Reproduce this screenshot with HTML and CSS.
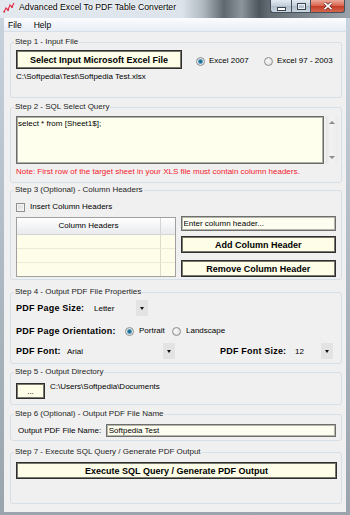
FILE: index.html
```html
<!DOCTYPE html>
<html lang="en">
<head>
  <meta charset="utf-8">
  <title>Advanced Excel To PDF Table Converter</title>
  <link rel="stylesheet" href="styles.css">
</head>
<body>
  <div class="window">
    <div class="titlebar">
      <svg class="app-icon" width="12" height="11" viewBox="0 0 12 11">
        <polyline points="1,10 3,6 5,8 7,3 9,5 11,1" fill="none" stroke="#e8344a" stroke-width="1.2"/>
        <rect x="0.5" y="9" width="1.5" height="1.5" fill="#c81e32"/>
        <rect x="4.3" y="7.3" width="1.5" height="1.5" fill="#c81e32"/>
        <rect x="8.3" y="4.3" width="1.5" height="1.5" fill="#c81e32"/>
      </svg>
      <span class="title">Advanced Excel To PDF Table Converter</span>
      <div class="caption-buttons">
        <span class="cap-btn cap-min">
          <svg width="9" height="4" viewBox="0 0 9 4"><rect x="0.5" y="0.5" width="8" height="3" fill="#fff" stroke="#3a4550"/></svg>
        </span>
        <span class="cap-btn cap-max">
          <svg width="9" height="7" viewBox="0 0 9 7"><rect x="0.5" y="0.5" width="8" height="6" fill="none" stroke="#3a4550"/><rect x="1.5" y="1.5" width="6" height="4" fill="none" stroke="#e8eef4"/></svg>
        </span>
        <span class="cap-btn cap-close">
          <svg width="10" height="8" viewBox="0 0 10 8"><path d="M1.5 0.8 L8.5 7.2 M8.5 0.8 L1.5 7.2" stroke="#5a1a12" stroke-width="3"/><path d="M1.5 0.8 L8.5 7.2 M8.5 0.8 L1.5 7.2" stroke="#fff" stroke-width="1.8"/></svg>
        </span>
      </div>
    </div>

    <div class="menubar">
      <span>File</span>
      <span>Help</span>
    </div>

    <div class="client">
      <fieldset class="group step1">
        <legend>Step 1 - Input File</legend>
        <div class="input-row">
          <button class="btn btn-input">Select Input Microsoft Excel File</button>
          <div class="radio-set">
            <span class="radio checked excel-new">Excel 2007</span>
            <span class="radio">Excel 97 - 2003</span>
          </div>
        </div>
        <div class="path">C:\Softpedia\Test\Softpedia Test.xlsx</div>
      </fieldset>

      <fieldset class="group step2">
        <legend>Step 2 - SQL Select Query</legend>
        <div class="query-row">
          <textarea class="query" readonly>select * from [Sheet1$];</textarea>
          <div class="vscroll">
            <span class="arrow-up"></span>
            <span class="arrow-down"></span>
          </div>
        </div>
        <div class="note">Note: First row of the target sheet in your XLS file must contain column headers.</div>
      </fieldset>

      <fieldset class="group step3">
        <legend>Step 3 (Optional) - Column Headers</legend>
        <div class="check-row">
          <span class="checkbox"></span>
          <span>Insert Column Headers</span>
        </div>
        <div class="headers">
          <div class="grid">
            <div class="grid-head">
              <span class="cell-main">Column Headers</span>
              <span class="cell-end"></span>
            </div>
            <div class="grid-row"><span class="cell-main"></span><span class="cell-end"></span></div>
            <div class="grid-row"><span class="cell-main"></span><span class="cell-end"></span></div>
            <div class="grid-row"><span class="cell-main"></span><span class="cell-end"></span></div>
          </div>
          <div class="side">
            <input class="field field-header" type="text" value="Enter column header..." readonly>
            <button class="btn btn-add">Add Column Header</button>
            <button class="btn btn-remove">Remove Column Header</button>
          </div>
        </div>
      </fieldset>

      <fieldset class="group step4">
        <legend>Step 4 - Output PDF File Properties</legend>
        <div class="prop-row row-size">
          <span class="prop-label size-label">PDF Page Size:</span>
          <span class="combo size-combo"><span class="combo-value">Letter</span><span class="combo-arrow"></span></span>
        </div>
        <div class="prop-row row-orient">
          <span class="prop-label orient-label">PDF Page Orientation:</span>
          <span class="radio checked portrait">Portrait</span>
          <span class="radio">Landscape</span>
        </div>
        <div class="prop-row row-font">
          <span class="prop-label font-label">PDF Font:</span>
          <span class="combo font-combo"><span class="combo-value">Arial</span><span class="combo-arrow"></span></span>
          <span class="prop-label fsize-label">PDF Font Size:</span>
          <span class="combo fsize-combo"><span class="combo-value">12</span><span class="combo-arrow"></span></span>
        </div>
      </fieldset>

      <fieldset class="group step5">
        <legend>Step 5 - Output Directory</legend>
        <div class="dir-row">
          <button class="btn btn-browse">...</button>
          <span class="dir-path">C:\Users\Softpedia\Documents</span>
        </div>
      </fieldset>

      <fieldset class="group step6">
        <legend>Step 6 (Optional) - Output PDF File Name</legend>
        <div class="name-row">
          <span class="name-label">Output PDF File Name:</span>
          <input class="field field-name" type="text" value="Softpedia Test" readonly>
        </div>
      </fieldset>

      <fieldset class="group step7">
        <legend>Step 7 - Execute SQL Query / Generate PDF Output</legend>
        <button class="btn btn-run">Execute SQL Query / Generate PDF Output</button>
      </fieldset>
    </div>
  </div>
</body>
</html>
```

FILE: styles.css
```css
html,
body {
  margin: 0;
}

body {
  width: 350px;
  height: 515px;
  overflow: hidden;
  font-family: "Liberation Sans", Arial, sans-serif;
  font-size: 8px;
  color: #000;
}

.window {
  height: 515px;
  display: flex;
  flex-direction: column;
  background: linear-gradient(to bottom, #c9d4de, #aab5bf 60%, #9aa4ac);
}

/* title bar */
.titlebar {
  height: 18px;
  flex: none;
  display: flex;
  align-items: flex-start;
  background: linear-gradient(to right, #e3e9ef 0%, #dce3ea 52%, #b0b8c0 58%, #5f676f 64%, #8c949c 69%, #4d555d 74%, #646c74 77%, #9aa3ab 100%);
}

.app-icon {
  margin: 2px 0 0 3px;
}

.title {
  margin-left: 4px;
  line-height: 15px;
  font-size: 8.7px;
  text-shadow: 0 0 3px #fff, 0 0 2px #fff;
}

.caption-buttons {
  margin-left: auto;
  margin-right: 5px;
  display: flex;
}

.cap-btn {
  box-sizing: border-box;
  height: 13px;
  display: flex;
  align-items: center;
  justify-content: center;
  border: 1px solid #46505b;
  border-top: none;
}

.cap-min {
  width: 21px;
  border-right: none;
  border-bottom-left-radius: 3px;
  background: linear-gradient(#e3e9ef, #c3ceda 50%, #aebdcb 51%, #cbd7e2);
}

.cap-min svg {
  margin-top: 5px;
}

.cap-max {
  width: 20px;
  background: linear-gradient(#e3e9ef, #c3ceda 50%, #aebdcb 51%, #cbd7e2);
}

.cap-close {
  width: 34px;
  border-left: none;
  border-bottom-right-radius: 3px;
  background: linear-gradient(#eaa898, #d8624c 50%, #c43c24 51%, #d4684f);
}

/* menu */
.menubar {
  box-sizing: border-box;
  height: 14px;
  margin: 0 4px;
  padding-left: 4px;
  display: flex;
  align-items: center;
  gap: 12px;
  font-size: 8.5px;
  background: linear-gradient(#fbfcfe, #e8edf5);
  border-bottom: 1px solid #d8dfe9;
}

.client {
  flex: 1;
  margin: 0 4px 3px;
  display: flex;
  flex-direction: column;
  background: #f0f0f0;
}

/* group boxes */
.group {
  box-sizing: border-box;
  min-width: 0;
  margin: 0 4px 0 6px;
  padding: 0 5px;
  border: 1px solid #d5dfe5;
  border-radius: 3px;
}

.group legend {
  padding: 0 1px;
  margin-left: -2px;
  line-height: 12px;
  color: #1e1e1e;
}

.step1 { height: 62px; margin-top: 4px; }
.step2 { height: 82px; margin-top: 3px; }
.step3 { height: 96px; margin-top: 1px; }
.step4 { height: 78px; margin-top: 6px; }
.step5 { height: 39px; margin-top: 2px; }
.step6 { height: 33px; margin-top: 3px; }
.step7 { height: 58px; margin-top: 5px; }

/* buttons and fields */
.btn {
  box-sizing: border-box;
  margin: 0;
  padding: 0;
  font-family: "Liberation Sans", Arial, sans-serif;
  font-size: 9px;
  font-weight: bold;
  color: #000;
  background: #fdfde8;
  border: 1px solid #2e2e2e;
  box-shadow: inset 0 0 0 1px #77776c;
}

.field {
  box-sizing: border-box;
  margin: 0;
  padding: 0 2px;
  font-family: "Liberation Sans", Arial, sans-serif;
  font-size: 8px;
  color: #000;
  background: #fefef0;
  border: 1px solid #6e6e6e;
  box-shadow: inset 0 0 0 1px #b4b4a8;
  outline: none;
}

.radio {
  display: inline-flex;
  align-items: center;
  line-height: 12px;
}

.radio::before {
  content: "";
  box-sizing: border-box;
  width: 9px;
  height: 9px;
  margin-right: 4px;
  border: 1px solid #8e8f8f;
  border-radius: 50%;
  background: radial-gradient(circle at 40% 40%, #fafafa, #d6d6d6);
}

.radio.checked::before {
  background: radial-gradient(circle, #1e5c7c 0, #2f7fa7 1.6px, #8cc2dc 2.4px, #e4e4e4 3px, #f6f6f6 4px);
}

/* step 1 */
.input-row {
  display: flex;
  align-items: center;
  margin-top: 2px;
}

.btn-input {
  width: 166px;
  height: 19px;
}

.radio-set {
  display: flex;
  margin: 3px 0 0 14px;
}

.excel-new {
  width: 68px;
}

.path {
  margin-top: 2px;
  line-height: 12px;
}

/* step 2 */
.query-row {
  display: flex;
  margin-top: 3px;
  height: 48px;
}

.query {
  flex: none;
  box-sizing: border-box;
  width: 308px;
  height: 48px;
  margin: 0;
  padding: 2px 1px;
  resize: none;
  overflow: hidden;
  font-family: "Liberation Sans", Arial, sans-serif;
  font-size: 8px;
  line-height: 10px;
  background: #ffffee;
  border: 1px solid #6a6a6a;
  box-shadow: inset 0 0 0 1px #b0b0a6;
  outline: none;
}

.vscroll {
  flex: none;
  width: 12px;
  margin-left: 2px;
  display: flex;
  flex-direction: column;
  justify-content: space-between;
  align-items: center;
  padding: 5px 0;
  box-sizing: border-box;
  background: linear-gradient(to right, #e6e6e6, #f2f2f2 40%, #ececec);
}

.arrow-up,
.arrow-down {
  width: 0;
  height: 0;
  border-left: 3px solid transparent;
  border-right: 3px solid transparent;
}

.arrow-up {
  border-bottom: 3px solid #8a8a8a;
}

.arrow-down {
  border-top: 3px solid #8a8a8a;
}

.note {
  margin-top: 2px;
  line-height: 12px;
  color: #f4202c;
}

/* step 3 */
.check-row {
  display: flex;
  align-items: center;
  margin-top: 5px;
  line-height: 12px;
}

.checkbox {
  box-sizing: border-box;
  width: 9px;
  height: 9px;
  margin-right: 5px;
  border: 1px solid #8e8f8f;
  background: linear-gradient(135deg, #d8d8d8, #f6f6f6);
  box-shadow: inset 0 0 0 1px #f4f4f4;
}

.headers {
  display: flex;
  gap: 5px;
  margin-top: 4px;
}

.grid {
  box-sizing: border-box;
  width: 160px;
  height: 60px;
  border: 1px solid #a0a0a0;
  background: #fdfdea;
  overflow: hidden;
}

.grid-head {
  display: flex;
  height: 16px;
  line-height: 16px;
  background: linear-gradient(#ffffff, #f4f5f7 50%, #e8eaed);
  border-bottom: 1px solid #d5d5d5;
}

.grid-row {
  display: flex;
  height: 13px;
  border-bottom: 1px solid #ecead6;
}

.cell-main {
  width: 143px;
  text-align: center;
  border-right: 1px solid #dcdccc;
}

.grid-head .cell-main {
  border-right-color: #d5d5d5;
}

.side {
  width: 156px;
  margin-top: -1px;
  display: flex;
  flex-direction: column;
}

.field-header {
  height: 15px;
}

.btn-add {
  height: 17px;
  margin-top: 5px;
}

.btn-remove {
  height: 17px;
  margin-top: 7px;
}

/* step 4 */
.prop-row {
  display: flex;
  align-items: center;
  height: 16px;
}

.row-size { margin-top: 2px; }
.row-orient { margin-top: 7px; }
.row-font { margin-top: 4px; }

.prop-label {
  font-size: 9px;
  font-weight: bold;
  letter-spacing: 0.2px;
}

.size-label { width: 75px; }
.orient-label { width: 109px; }
.font-label { width: 48px; }
.fsize-label { width: 72px; margin-left: 45px; }

.combo {
  display: flex;
  align-items: center;
  height: 16px;
}

.size-combo { width: 57px; }
.font-combo { width: 111px; }
.fsize-combo { width: 41px; }

.combo-value {
  flex: 1;
  padding-left: 3px;
}

.combo-arrow {
  width: 12px;
  height: 16px;
  display: flex;
  align-items: center;
  justify-content: center;
  background: #e3e3e3;
}

.combo-arrow::after {
  content: "";
  border-left: 2.5px solid transparent;
  border-right: 2.5px solid transparent;
  border-top: 3px solid #111;
}

.portrait {
  width: 47px;
}

.row-orient .radio::before {
  margin-right: 5px;
}

/* step 5 */
.dir-row {
  display: flex;
  align-items: flex-start;
  margin-top: 5px;
}

.btn-browse {
  width: 29px;
  height: 16px;
  font-weight: normal;
  font-size: 8px;
}

.dir-path {
  margin: -2px 0 0 5px;
  line-height: 12px;
}

/* step 6 */
.name-row {
  display: flex;
  align-items: center;
  margin-top: 4px;
}

.name-label {
  width: 88px;
  padding-left: 2px;
}

.field-name {
  width: 231px;
  height: 13px;
}

/* step 7 */
.btn-run {
  display: block;
  width: 321px;
  height: 17px;
  margin-top: 4px;
}
```
